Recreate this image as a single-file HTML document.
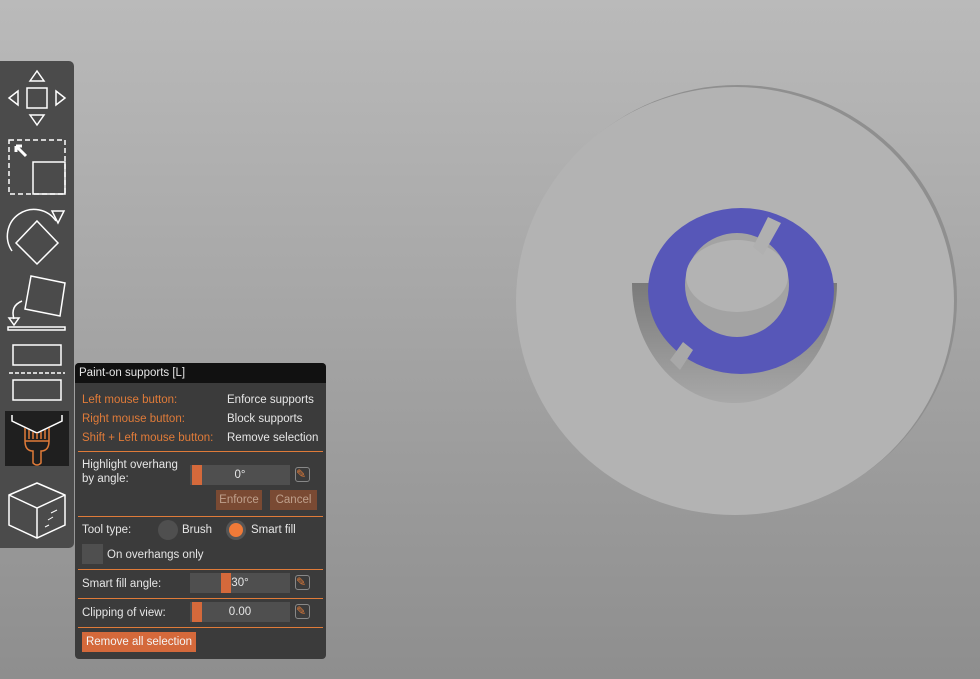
<!DOCTYPE html>
<html><head><style>
body{margin:0;width:980px;height:679px;overflow:hidden;background:linear-gradient(#bababa,#8e8e8e);font-family:"Liberation Sans",sans-serif;position:relative}
.a{position:absolute}
.tb{left:0;top:61px;width:74px;height:487px;background:#4b4b4b;border-radius:0 5px 5px 0}
.pn{left:75px;top:363px;width:251px;height:296px;background:#3b3b3b;border-radius:4px;font-size:11.5px;color:#e6e6e6}
.tt{left:0;top:0;width:251px;height:20px;background:#111;border-radius:4px 4px 0 0}
.or{color:#e07b39}
.hr{height:1px;background:#e07b39;left:3px;width:245px}
.sl{background:#4f4f4f;height:20px;width:100px;text-align:center;line-height:20px}
.kn{background:#d4693b;width:10px;height:20px;top:0}
.btn{background:#7a4a33;color:#bfa08c;text-align:center;line-height:20px;height:20px}
.ed{width:13px;height:13px;border:1.5px solid #888;border-radius:3px;color:#e07b39;font-size:12px;line-height:12px}
</style></head><body>
<svg class="a" style="left:500px;top:80px" width="470" height="450">
<defs><linearGradient id="w" x1="0" x2="0" y1="0" y2="1"><stop offset="0" stop-color="#7a7a7a"/><stop offset="1" stop-color="#a8a8a8"/></linearGradient></defs>
<ellipse cx="238" cy="219" rx="219" ry="214" fill="#8f8f8f"/>
<ellipse cx="235" cy="221" rx="219" ry="214" fill="#b3b3b3"/>
<path d="M132 203 A102.5 120 0 0 0 337 203 Z" fill="url(#w)"/>
<ellipse cx="241" cy="211" rx="93" ry="83" fill="#5757b8"/>
<ellipse cx="237" cy="205" rx="52" ry="52" fill="#a3a3a3"/>
<ellipse cx="237" cy="196" rx="51" ry="36" fill="#b3b3b3"/>
<path d="M268 137 L281 143 L263 175 L253 167Z" fill="#b0b0b0"/>
<path d="M183 262 L193 270 L180 290 L170 280Z" fill="#a8a8a8"/>
</svg>
<div class="a tb"></div>
<svg class="a" style="left:0;top:61px" width="74" height="487" fill="none" stroke="#fff" stroke-width="1.5">
<rect x="27" y="27" width="20" height="20"/><path d="M30 20 L37 10 L44 20Z M30 54 L37 64 L44 54Z M18 30 L9 37 L18 44Z M56 30 L65 37 L56 44Z"/>
<rect x="9" y="79" width="56" height="54" stroke-dasharray="5 3"/><rect x="33" y="101" width="32" height="32"/>
<path d="M16 85 L22 85 M16 85 L16 91 M16 85 L26 95" stroke-width="3"/>
<path d="M12 190 A26 26 0 0 1 56 160"/><path d="M52 150 L64 150 L58 162Z"/><path d="M37 160 L58 182 L37 203 L16 182Z"/>
<path d="M31 215 L65 222 L60 255 L25 248Z"/><path d="M22 240 Q10 245 14 258"/><path d="M9 257 L19 257 L14 264Z"/><rect x="8" y="266" width="57" height="3"/>
<rect x="13" y="284" width="48" height="20"/><path d="M9 312 L65 312" stroke-dasharray="4 2"/><rect x="13" y="319" width="48" height="20"/>
</svg>
<div class="a" style="left:5px;top:411px;width:64px;height:55px;background:#1f1f1f"></div>
<svg class="a" style="left:5px;top:411px" width="64" height="60" fill="none" stroke-width="1.5">
<path d="M7 4 V10 L32 22 L57 10 V4" stroke="#fff"/>
<path d="M20 17 V30 H44 V17 M24 19 V28 M28 21 V28 M32 22 V28 M36 21 V28 M40 19 V28 M20 30 Q20 40 28 40 V52 Q32 56 36 52 V40 Q44 40 44 30" stroke="#e07b39"/>
</svg>
<svg class="a" style="left:5px;top:480px" width="64" height="64" fill="none" stroke="#fff" stroke-width="1.5">
<path d="M4 15 L32 3 L60 15 L60 45 L32 58 L4 45Z M4 15 L32 28 L60 15 M32 28 V58"/>
<path d="M40 47 L44 45 M43 40 L48 37 M46 33 L52 30" stroke-width="1"/>
</svg>
<div class="a pn">
<div class="a tt"></div><div class="a" style="left:4px;top:4px">Paint-on supports [L]</div>
<div class="a or" style="left:7px;top:31px">Left mouse button:</div><div class="a" style="left:152px;top:31px">Enforce supports</div>
<div class="a or" style="left:7px;top:50px">Right mouse button:</div><div class="a" style="left:152px;top:50px">Block supports</div>
<div class="a or" style="left:7px;top:69px">Shift + Left mouse button:</div><div class="a" style="left:152px;top:69px">Remove selection</div>
<div class="a hr" style="top:88px"></div>
<div class="a" style="left:7px;top:95px;line-height:14px">Highlight overhang<br>by angle:</div>
<div class="a sl" style="left:115px;top:102px">0°<div class="a kn" style="left:2px"></div></div>
<div class="a ed" style="left:220px;top:104px">✎</div>
<div class="a btn" style="left:141px;top:127px;width:46px">Enforce</div>
<div class="a btn" style="left:195px;top:127px;width:47px">Cancel</div>
<div class="a hr" style="top:153px"></div>
<div class="a" style="left:7px;top:161px">Tool type:</div>
<div class="a" style="left:83px;top:157px;width:20px;height:20px;border-radius:50%;background:#4f4f4f"></div><div class="a" style="left:107px;top:161px">Brush</div>
<div class="a" style="left:151px;top:157px;width:20px;height:20px;border-radius:50%;background:#555"></div><div class="a" style="left:154px;top:160px;width:14px;height:14px;border-radius:50%;background:#f07a38"></div><div class="a" style="left:176px;top:161px">Smart fill</div>
<div class="a" style="left:7px;top:181px;width:21px;height:20px;background:#4f4f4f"></div><div class="a" style="left:32px;top:186px">On overhangs only</div>
<div class="a hr" style="top:206px"></div>
<div class="a" style="left:7px;top:215px">Smart fill angle:</div>
<div class="a sl" style="left:115px;top:210px">30°<div class="a kn" style="left:31px"></div></div>
<div class="a ed" style="left:220px;top:212px">✎</div>
<div class="a hr" style="top:235px"></div>
<div class="a" style="left:7px;top:244px">Clipping of view:</div>
<div class="a sl" style="left:115px;top:239px">0.00<div class="a kn" style="left:2px"></div></div>
<div class="a ed" style="left:220px;top:241px">✎</div>
<div class="a hr" style="top:264px"></div>
<div class="a" style="left:7px;top:269px;width:114px;height:20px;background:#d4693b;color:#f4f4f4;line-height:20px;text-align:center">Remove all selection</div>
</div>
</body></html>
